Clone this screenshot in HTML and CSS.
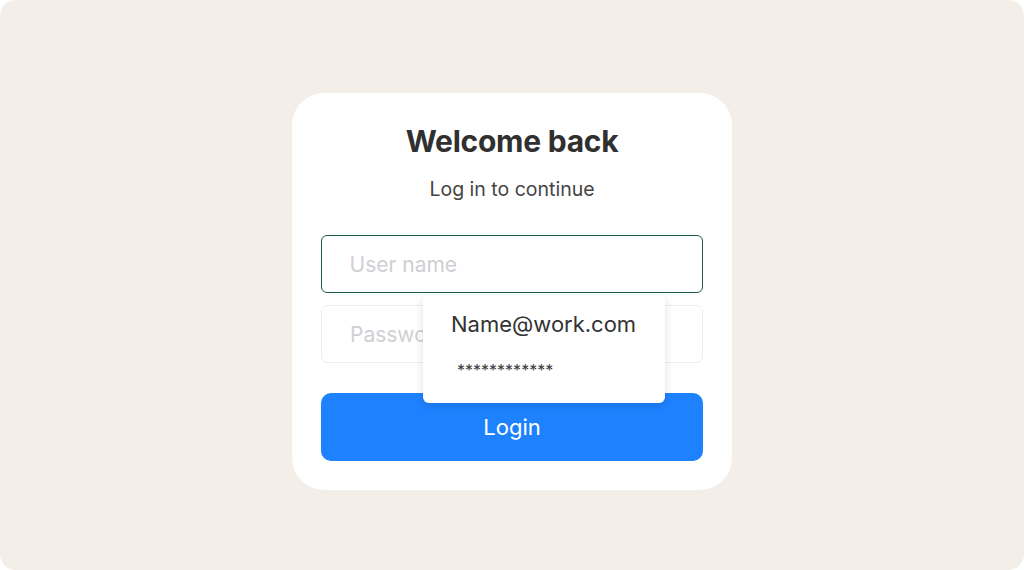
FILE: index.html
```html
<!DOCTYPE html>
<html lang="en">
<head>
    <meta charset="UTF-8">
    <meta name="viewport" content="width=device-width, initial-scale=1.0">
    <title>Login</title>
    <link rel="stylesheet" href="styles.css">
</head>
<body>
    <div class="frame">
        <div class="card">
            <h1>Welcome back</h1>
            <p class="subtitle">Log in to continue</p>
            <div class="fields">
                <input class="field active" type="text" placeholder="User name">
                <input class="field" type="password" placeholder="Password">
                <div class="autofill">
                    <div class="autofill-user">Name@work.com</div>
                    <div class="autofill-pass">************</div>
                </div>
            </div>
            <button class="login">Login</button>
        </div>
    </div>
</body>
</html>
```

FILE: styles.css
```css
body {
    margin: 0;
    background: #fff;
    font-family: 'Inter', 'Liberation Sans', sans-serif;
}
.frame {
    width: 1024px;
    height: 570px;
    box-sizing: border-box;
    background: #f4eee9;
    border-radius: 16px;
    display: flex;
    justify-content: center;
    align-items: flex-start;
    padding-top: 93px;
}
.card {
    width: 440px;
    box-sizing: border-box;
    background: #fff;
    border-radius: 32px;
    padding: 31px 29px 29px;
    text-align: center;
}
h1 {
    margin: 0;
    font-size: 30px;
    line-height: 34px;
    font-weight: 700;
    color: #303030;
    letter-spacing: -0.25px;
}
.subtitle {
    margin: 19px 0 0;
    font-size: 19.5px;
    line-height: 24px;
    color: #444;
}
.fields {
    position: relative;
    display: flex;
    flex-direction: column;
    gap: 12px;
    margin-top: 34px;
}
.field {
    height: 58px;
    box-sizing: border-box;
    border: 1px solid #eeeeee;
    border-radius: 6px;
    padding: 0 28px;
    font-family: inherit;
    font-size: 21px;
    color: #333;
    background: #fff;
    outline: none;
}
.field::placeholder {
    color: #cfcfd4;
}
.field.active {
    border: 1.5px solid #1d5e4c;
    padding-left: 27.5px;
}
.autofill {
    position: absolute;
    left: 102px;
    top: 60px;
    width: 242px;
    height: 108px;
    box-sizing: border-box;
    background: #fff;
    border-radius: 6px;
    box-shadow: 0 3px 10px rgba(0, 0, 0, 0.12);
    text-align: left;
    padding: 14px 0 0 28px;
}
.autofill-user {
    font-size: 22px;
    line-height: 30px;
    color: #333;
}
.autofill-pass {
    margin-top: 21px;
    padding-left: 6px;
    font-size: 16px;
    line-height: 20px;
    color: #3a3a3a;
}
.login {
    display: block;
    width: 100%;
    height: 68px;
    margin-top: 30px;
    border: none;
    border-radius: 10px;
    background: #1e82ff;
    color: #fff;
    font-family: inherit;
    font-size: 22px;
}
```
